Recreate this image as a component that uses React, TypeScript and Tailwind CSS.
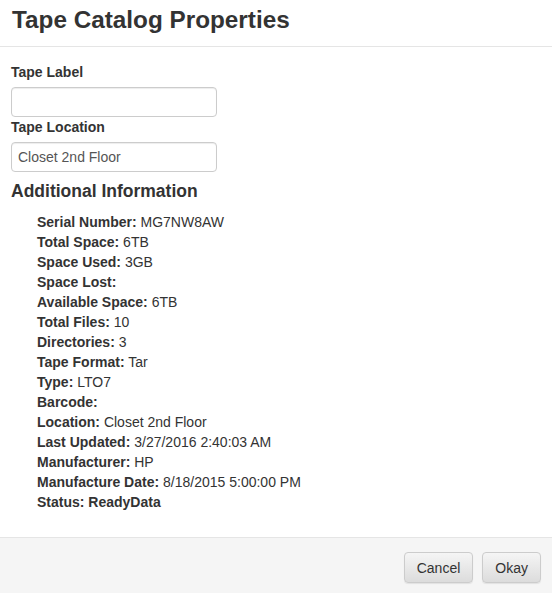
import React from "react";

const items: [string, string][] = [
  ["Serial Number:", "MG7NW8AW"],
  ["Total Space:", "6TB"],
  ["Space Used:", "3GB"],
  ["Space Lost:", ""],
  ["Available Space:", "6TB"],
  ["Total Files:", "10"],
  ["Directories:", "3"],
  ["Tape Format:", "Tar"],
  ["Type:", "LTO7"],
  ["Barcode:", ""],
  ["Location:", "Closet 2nd Floor"],
  ["Last Updated:", "3/27/2016 2:40:03 AM"],
  ["Manufacturer:", "HP"],
  ["Manufacture Date:", "8/18/2015 5:00:00 PM"],
  ["Status:", ""],
];

export default function App() {
  return (
    <div className="w-[552px] h-[593px] bg-white flex flex-col text-[#333] font-['Liberation_Sans',Arial,sans-serif] text-[14px] leading-[20px]">
      <div className="h-[47px] border-b border-[#e5e5e5] px-[12px] pt-[7px]">
        <h3 className="text-[24.3px] leading-[26px] font-bold">Tape Catalog Properties</h3>
      </div>
      <div className="flex-1 px-[11px] pt-[15px]">
        <label className="block font-bold mb-[5px]">Tape Label</label>
        <input
          className="block w-[206px] h-[30px] border border-[#ccc] rounded-[4px] px-[6px] text-[14px] text-[#555] shadow-[inset_0_1px_1px_rgba(0,0,0,0.075)] outline-none"
          defaultValue=""
        />
        <label className="block font-bold mb-[5px]">Tape Location</label>
        <input
          className="block w-[206px] h-[30px] border border-[#ccc] rounded-[4px] px-[6px] text-[14px] text-[#555] shadow-[inset_0_1px_1px_rgba(0,0,0,0.075)] outline-none"
          defaultValue="Closet 2nd Floor"
        />
        <h4 className="text-[17.5px] leading-[20px] font-bold mt-[9px] text-[#333]">Additional Information</h4>
        <ul className="mt-[11px] pl-[26px]">
          {items.map(([k, v]) =>
            k === "Status:" ? (
              <li key={k} className="font-bold">Status: ReadyData</li>
            ) : (
              <li key={k}>
                <span className="font-bold">{k}</span>
                {v ? " " + v : ""}
              </li>
            )
          )}
        </ul>
      </div>
      <div className="h-[56px] border-t border-[#e5e5e5] bg-[#f5f5f5] flex justify-end items-start pt-[14px] pr-[11px] gap-[9px]">
        <button className="h-[31px] px-[12px] border border-[#ccc] rounded-[4px] bg-gradient-to-b from-[#f5f5f5] to-[#dcdcdc] text-[#333] text-[14px] shadow-[0_1px_1px_rgba(0,0,0,0.08)]">
          Cancel
        </button>
        <button className="h-[31px] px-[12px] border border-[#ccc] rounded-[4px] bg-gradient-to-b from-[#f5f5f5] to-[#dcdcdc] text-[#333] text-[14px] shadow-[0_1px_1px_rgba(0,0,0,0.08)]">
          Okay
        </button>
      </div>
    </div>
  );
}
